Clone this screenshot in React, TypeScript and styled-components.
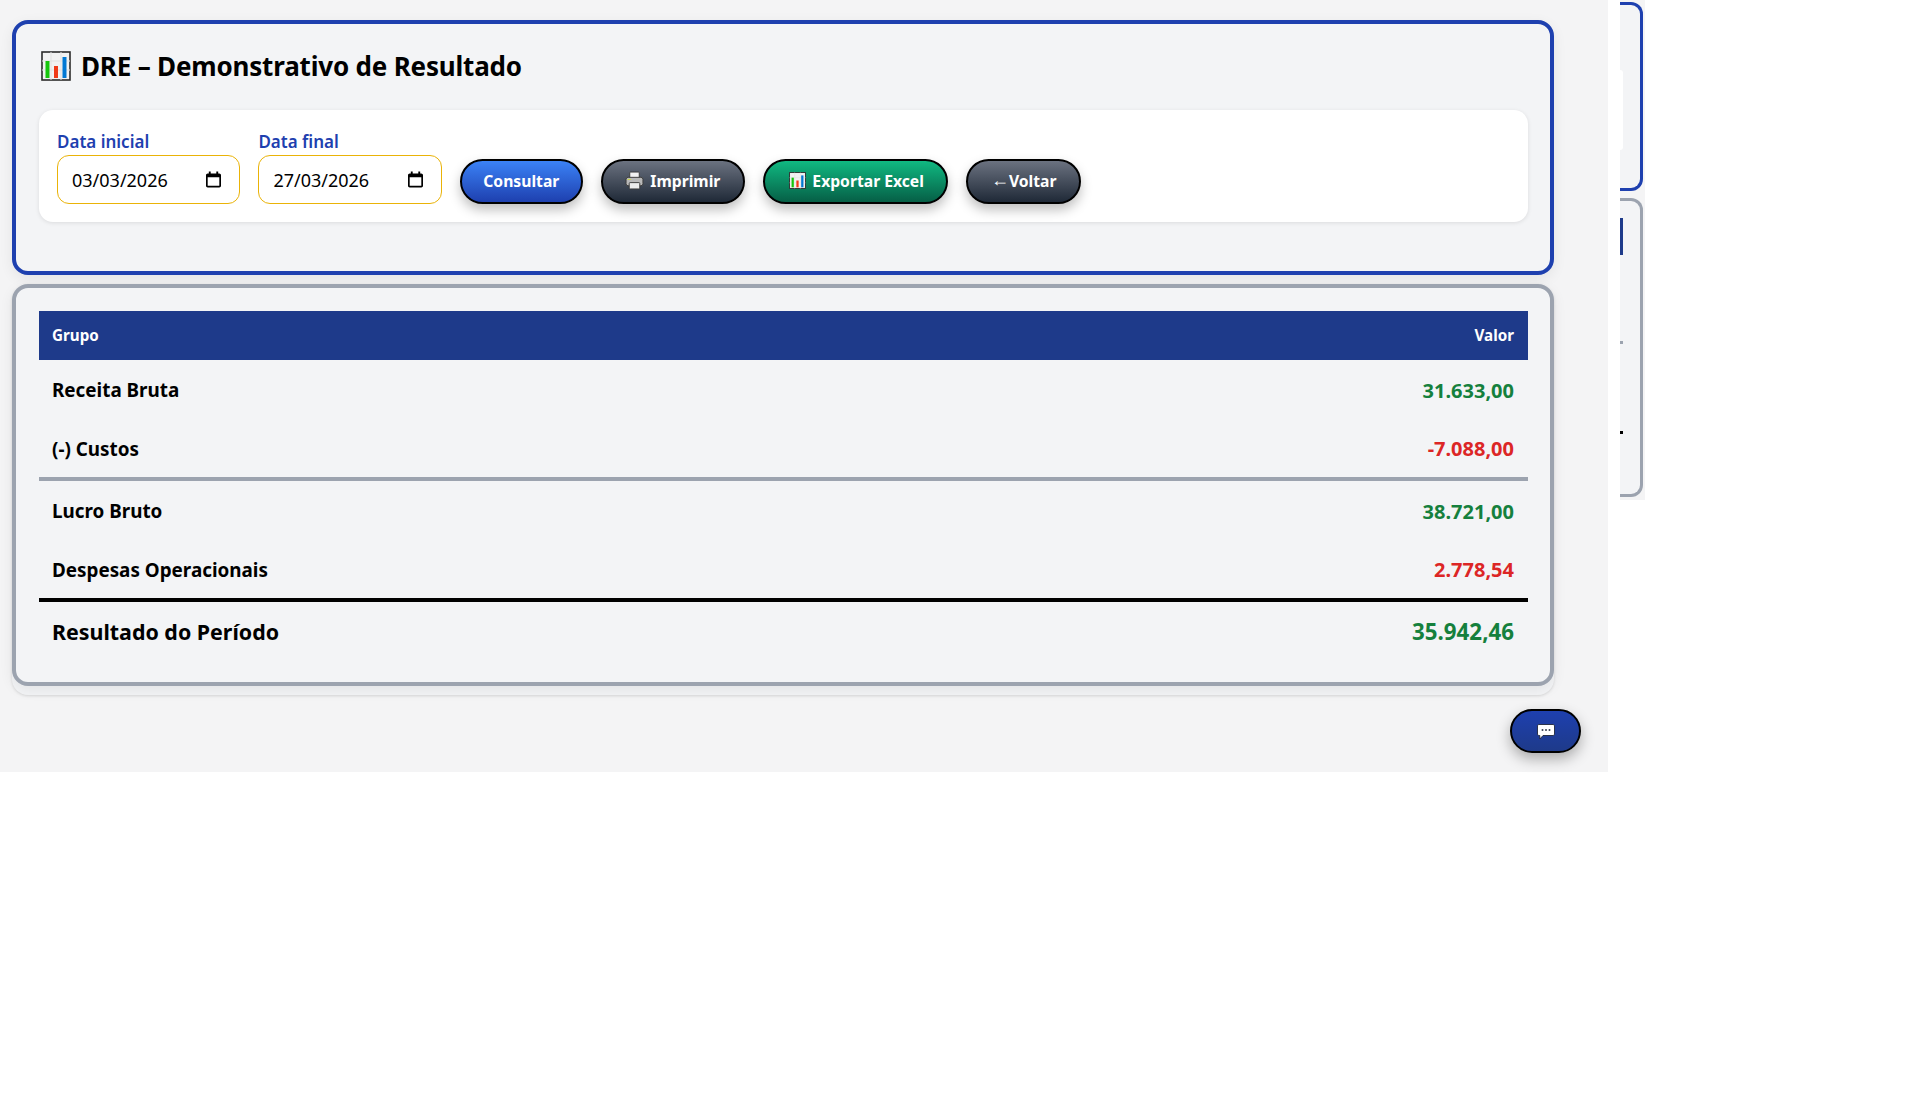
import React from 'react';
import styled, { createGlobalStyle } from 'styled-components';

const GlobalStyle = createGlobalStyle`
  html, body {
    margin: 0;
    padding: 0;
    background: #ffffff;
    font-family: "Noto Sans", "Open Sans", sans-serif;
    color: #000000;
  }
`;

const Screen = styled.div`
  display: flex;
  align-items: flex-start;
  gap: 12px;
  width: 1930px;
  height: 1118px;
  overflow: hidden;
`;

const Stage = styled.main`
  position: relative;
  box-sizing: border-box;
  flex: none;
  width: 1608px;
  height: 772px;
  padding: 20px 54px 0 12px;
  background: #f4f4f5;
  display: flex;
  flex-direction: column;
  gap: 9px;
`;

const Panel = styled.section<{ $tone: 'blue' | 'gray' }>`
  box-sizing: border-box;
  border: 4px solid ${p => (p.$tone === 'blue' ? '#1e40af' : '#9ca3af')};
  border-radius: 16px;
  background: #f3f4f6;
  padding: ${p => (p.$tone === 'blue' ? '22px 22px 22px 23px' : '23px 22px 21px 23px')};
  box-shadow: 0 4px 14px rgba(0, 0, 0, 0.07);
`;

const ResultShell = styled.div`
  padding-bottom: 9px;
  border-radius: 16px;
  background: #f3f4f6;
  box-shadow: 0 1px 3px rgba(0, 0, 0, 0.12);
`;

const Title = styled.h1`
  display: flex;
  align-items: center;
  gap: 10px;
  height: 40px;
  margin: 0 0 24px 2px;
  font-size: 26px;
  font-weight: 700;
  letter-spacing: -0.18px;
`;

const FilterCard = styled.div`
  display: flex;
  align-items: flex-end;
  gap: 18px;
  margin-bottom: 27px;
  padding: 18px;
  border-radius: 14px;
  background: #ffffff;
  box-shadow: 0 1px 4px rgba(0, 0, 0, 0.1);
`;

const Field = styled.label`
  display: flex;
  flex-direction: column;
  gap: 4px;
`;

const FieldLabel = styled.span`
  height: 23px;
  line-height: 27px;
  font-size: 17px;
  font-weight: 600;
  color: #1e40af;
`;

const DateBox = styled.div`
  box-sizing: border-box;
  display: flex;
  align-items: center;
  justify-content: space-between;
  width: 183.4px;
  height: 49px;
  padding: 0 18px 0 14px;
  border: 1.5px solid #eab308;
  border-radius: 12px;
  background: #ffffff;
`;

const DateText = styled.input`
  width: 120px;
  padding: 0;
  border: none;
  outline: none;
  background: transparent;
  font-family: inherit;
  font-size: 18px;
  font-weight: 400;
  color: #000000;
`;

const ActionButton = styled.button<{ $tone: 'blue' | 'slate' | 'green'; $tight?: boolean }>`
  display: flex;
  align-items: center;
  justify-content: center;
  gap: 6px;
  height: 45px;
  padding: 0 ${p => (p.$tight ? '21.5px' : '22.5px')} 2px;
  border: 2px solid #000000;
  border-radius: 24px;
  cursor: pointer;
  background: ${p =>
    p.$tone === 'blue'
      ? 'linear-gradient(180deg, #3b82f6, #1e40af)'
      : p.$tone === 'green'
        ? 'linear-gradient(180deg, #10b981, #065f46)'
        : 'linear-gradient(180deg, #6b7280, #1f2937)'};
  box-shadow: 0 6px 12px rgba(0, 0, 0, 0.25);
  color: #ffffff;
  font-family: inherit;
  font-size: 15.7px;
  font-weight: 700;
`;

const ExcelSlot = styled.span`
  display: flex;
  margin-left: 2px;
`;

const ArrowGlyph = styled.span`
  margin-right: -6px;
  font-family: "Liberation Sans", sans-serif;
  font-size: 18px;
  font-weight: 400;
`;

const Table = styled.table`
  width: 100%;
  border-collapse: collapse;
`;

const HeadCell = styled.th<{ $right?: boolean }>`
  height: 47px;
  padding: 0 14px 2px 13px;
  background: #1e3a8a;
  color: #ffffff;
  font-size: 15.2px;
  font-weight: 700;
  text-align: ${p => (p.$right ? 'right' : 'left')};
`;

const Row = styled.tr<{ $rule?: 'gray' | 'black' }>`
  border-bottom: ${p =>
    p.$rule ? `4px solid ${p.$rule === 'gray' ? '#9ca3af' : '#000000'}` : 'none'};
`;

const NameCell = styled.td<{ $big?: boolean }>`
  height: ${p => (p.$big ? '58.5px' : '56.5px')};
  padding: ${p => (p.$big ? '0' : '2px')} 13px 0;
  font-size: ${p => (p.$big ? '21.4px' : '18.85px')};
  font-weight: 700;
`;

const ValueCell = styled.td<{ $big?: boolean; $negative?: boolean }>`
  padding: ${p => (p.$big ? '0' : '2px')} 14px 0 13px;
  text-align: right;
  font-size: ${p => (p.$big ? '22.3px' : '20px')};
  font-weight: 700;
  color: ${p => (p.$negative ? '#dc2626' : '#15803d')};
`;

const ChatButton = styled.button`
  position: absolute;
  right: 27px;
  bottom: 19px;
  display: flex;
  align-items: center;
  justify-content: center;
  width: 71px;
  height: 44px;
  padding: 2px 0 0;
  border: 2px solid #000000;
  border-radius: 24px;
  cursor: pointer;
  background: linear-gradient(180deg, #1e40af, #1e3a8a);
  box-shadow: 0 6px 14px rgba(0, 0, 0, 0.3);
`;

const Sliver = styled.aside`
  flex: none;
  box-sizing: border-box;
  display: flex;
  flex-direction: column;
  gap: 7px;
  width: 25px;
  height: 500px;
  padding-top: 2px;
  background: #f4f4f5;
`;

const SliverPanel = styled.div<{ $tone: 'blue' | 'gray'; $height: number }>`
  box-sizing: border-box;
  display: flex;
  flex-direction: column;
  width: 23px;
  height: ${p => p.$height}px;
  border: 3px solid ${p => (p.$tone === 'blue' ? '#1e40af' : '#9ca3af')};
  border-left: none;
  border-radius: 0 12px 12px 0;
  background: #f3f4f6;
`;

const SliverCard = styled.div`
  width: 3px;
  height: 80px;
  margin-top: 65px;
  border-radius: 0 10px 10px 0;
  background: #ffffff;
`;

const SliverHead = styled.div`
  width: 3px;
  height: 37px;
  margin-top: 17px;
  background: #1e3a8a;
`;

const SliverTick = styled.div<{ $color: string; $gap: number }>`
  width: 3px;
  height: 3px;
  margin-top: ${p => p.$gap}px;
  background: ${p => p.$color};
`;

function ChartEmoji({ size }: { size: number }) {
  return (
    <svg width={size} height={size} viewBox="0 0 30 30">
      <rect x="1" y="1" width="28" height="28" fill="#f2f2f2" stroke="#2b2b2b" strokeWidth="1.6" />
      <path d="M1 10h28M1 19h28M10 1v28M20 1v28" stroke="#e2e2e2" strokeWidth="1" />
      <rect x="4.5" y="10" width="4" height="17" fill="#16c60c" />
      <rect x="13" y="15" width="4" height="12" fill="#f03a17" />
      <rect x="21.5" y="6" width="4" height="21" fill="#0078d4" />
    </svg>
  );
}

function PrinterEmoji() {
  return (
    <svg width="19" height="19" viewBox="0 0 18 18">
      <rect x="4.5" y="1" width="9" height="6" rx="0.8" fill="#f2f2f2" stroke="#3a3a3a" strokeWidth="0.9" />
      <rect x="1" y="6" width="16" height="8" rx="2" fill="#b9b9b9" stroke="#3a3a3a" strokeWidth="0.9" />
      <rect x="2.5" y="7.500" width="3" height="1" fill="#c8d84a" />
      <rect x="4" y="11" width="10" height="6" rx="0.8" fill="#ececec" stroke="#3a3a3a" strokeWidth="0.9" />
    </svg>
  );
}

function CalendarIcon() {
  return (
    <svg width="15" height="17" viewBox="0 0 16 17">
      <path
        d="M3 0h2v2h6V0h2v2h1.2c.9 0 1.8.8 1.8 1.8v11.4c0 1-.9 1.8-1.8 1.8H1.8C.9 17 0 16.200 0 15.200V3.800C0 2.800.9 2 1.800 2H3V0zM1.800 6v9.200h12.400V6H1.800z"
        fill="#000000"
      />
    </svg>
  );
}

function ChatEmoji() {
  return (
    <svg width="18" height="16" viewBox="0 0 18 16">
      <path
        d="M2 .5h14c.8 0 1.500.7 1.500 1.500v8c0 .8-.7 1.500-1.500 1.500H6L2.800 15V11.500H2C1.200 11.500.5 10.800.5 10V2C.5 1.200 1.200.5 2 .5z"
        fill="#ffffff"
        stroke="#111827"
        strokeWidth="0.8"
      />
      <circle cx="5.500" cy="6" r="1" fill="#374151" />
      <circle cx="9" cy="6" r="1" fill="#374151" />
      <circle cx="12.500" cy="6" r="1" fill="#374151" />
    </svg>
  );
}

function DateField({ label, value }: { label: string; value: string }) {
  return (
    <Field>
      <FieldLabel>{label}</FieldLabel>
      <DateBox>
        <DateText type="text" value={value} readOnly />
        <CalendarIcon />
      </DateBox>
    </Field>
  );
}

export default function App() {
  return (
    <Screen>
      <GlobalStyle />
      <Stage>
        <Panel $tone="blue">
          <Title>
            <ChartEmoji size={30} />
            DRE – Demonstrativo de Resultado
          </Title>
          <FilterCard>
            <DateField label="Data inicial" value="03/03/2026" />
            <DateField label="Data final" value="27/03/2026" />
            <ActionButton $tone="blue" $tight>Consultar</ActionButton>
            <ActionButton $tone="slate">
              <PrinterEmoji />
              Imprimir
            </ActionButton>
            <ActionButton $tone="green">
              <ExcelSlot>
                <ChartEmoji size={17} />
              </ExcelSlot>
              Exportar Excel
            </ActionButton>
            <ActionButton $tone="slate">
              <ArrowGlyph>←</ArrowGlyph>
              Voltar
            </ActionButton>
          </FilterCard>
        </Panel>
        <ResultShell>
          <Panel $tone="gray">
            <Table>
              <thead>
                <tr>
                  <HeadCell>Grupo</HeadCell>
                  <HeadCell $right>Valor</HeadCell>
                </tr>
              </thead>
              <tbody>
                <Row>
                  <NameCell>Receita Bruta</NameCell>
                  <ValueCell>31.633,00</ValueCell>
                </Row>
                <Row $rule="gray">
                  <NameCell>(-) Custos</NameCell>
                  <ValueCell $negative>-7.088,00</ValueCell>
                </Row>
                <Row>
                  <NameCell>Lucro Bruto</NameCell>
                  <ValueCell>38.721,00</ValueCell>
                </Row>
                <Row $rule="black">
                  <NameCell>Despesas Operacionais</NameCell>
                  <ValueCell $negative>2.778,54</ValueCell>
                </Row>
                <Row>
                  <NameCell $big>Resultado do Período</NameCell>
                  <ValueCell $big>35.942,46</ValueCell>
                </Row>
              </tbody>
            </Table>
          </Panel>
        </ResultShell>
        <ChatButton aria-label="Chat">
          <ChatEmoji />
        </ChatButton>
      </Stage>
      <Sliver>
        <SliverPanel $tone="blue" $height={189}>
          <SliverCard />
        </SliverPanel>
        <SliverPanel $tone="gray" $height={299}>
          <SliverHead />
          <SliverTick $color="#9ca3af" $gap={86} />
          <SliverTick $color="#000000" $gap={87} />
        </SliverPanel>
      </Sliver>
    </Screen>
  );
}
